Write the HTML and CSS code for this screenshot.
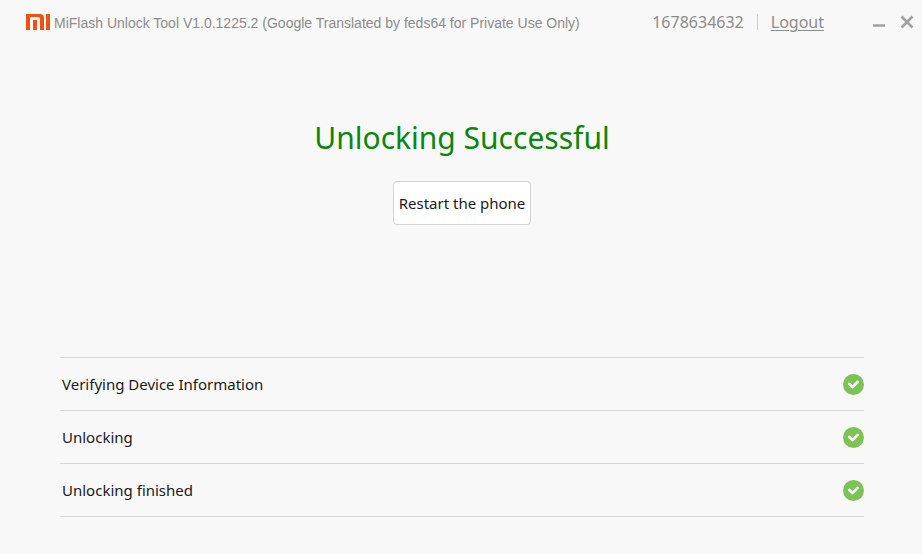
FILE: index.html
```html
<!DOCTYPE html>
<html lang="en">
<head>
    <meta charset="UTF-8">
    <meta name="viewport" content="width=device-width, initial-scale=1.0">
    <title>MiFlash Unlock Tool</title>
    <link rel="stylesheet" href="styles.css">
</head>
<body>
    <header class="titlebar">
        <svg class="logo" viewBox="0 0 24 16" aria-hidden="true">
            <path d="M0 0H14Q18 0 18 4V16H14V5Q14 3 12 3H4V16H0Z"/>
            <path d="M7 6H11V16H7Z"/>
            <path d="M20 0H24V16H20Z"/>
        </svg>
        <span class="app-name">MiFlash Unlock Tool V1.0.1225.2 (Google Translated by feds64 for Private Use Only)</span>
        <div class="account">
            <span class="account-id">1678634632</span>
            <a href="#" class="logout">Logout</a>
        </div>
        <div class="window-buttons">
            <button type="button" aria-label="Minimize">
                <svg viewBox="0 0 14 14"><path d="M1 10.5H13"/></svg>
            </button>
            <button type="button" aria-label="Close">
                <svg viewBox="0 0 14 14"><path d="M1.5 1.5L12.5 12.5M12.5 1.5L1.5 12.5"/></svg>
            </button>
        </div>
    </header>

    <main>
        <section class="result">
            <h1>Unlocking Successful</h1>
            <button type="button" class="restart">Restart the phone</button>
        </section>

        <ul class="steps">
            <li>
                <span>Verifying Device Information</span>
                <svg class="check" viewBox="0 0 20 20" role="img" aria-label="Done"><circle cx="10" cy="10" r="10"/><path d="M6 9.5L9 12.5L14 7.5"/></svg>
            </li>
            <li>
                <span>Unlocking</span>
                <svg class="check" viewBox="0 0 20 20" role="img" aria-label="Done"><circle cx="10" cy="10" r="10"/><path d="M6 9.5L9 12.5L14 7.5"/></svg>
            </li>
            <li>
                <span>Unlocking finished</span>
                <svg class="check" viewBox="0 0 20 20" role="img" aria-label="Done"><circle cx="10" cy="10" r="10"/><path d="M6 9.5L9 12.5L14 7.5"/></svg>
            </li>
        </ul>
    </main>
</body>
</html>
```
FILE: styles.css
```css
body {
    margin: 0;
    background: #f8f8f8;
    color: #1a1a1a;
    font-family: "Noto Sans", "Open Sans", sans-serif;
    font-size: 15px;
}
button {
    font: inherit;
    color: inherit;
    cursor: pointer;
}
.titlebar {
    display: flex;
    align-items: center;
    height: 44px;
    padding: 0 8px 0 26px;
    color: #8c8c8c;
}
.logo {
    width: 24px;
    height: 16px;
    margin-right: 4px;
    fill: #f2500f;
}
.app-name {
    padding-top: 2px;
    font-family: "Liberation Sans", Arial, sans-serif;
    font-size: 14px;
}
.account {
    display: flex;
    align-items: center;
    margin-left: auto;
    font-size: 16px;
    line-height: 16px;
}
.account-id {
    padding-right: 13px;
    border-right: 1px solid #ccc;
}
.logout {
    margin-left: 13px;
    color: inherit;
    text-underline-offset: 2px;
}
.window-buttons {
    display: flex;
    gap: 14px;
    margin-left: 48px;
}
.window-buttons button {
    display: flex;
    padding: 0;
    border: 0;
    background: none;
}
.window-buttons svg {
    width: 14px;
    height: 14px;
    fill: none;
    stroke: #a0a0a0;
    stroke-width: 2.5;
}
.result {
    display: flex;
    flex-direction: column;
    align-items: center;
    padding: 72px 0 0 2px;
}
h1 {
    margin: 0;
    color: #0a870a;
    font-size: 30px;
    font-weight: 400;
    line-height: 44px;
}
.restart {
    height: 44px;
    margin-top: 21px;
    padding: 0 5px;
    border: 1px solid #d3d3d3;
    border-radius: 4px;
    background: #fff;
}
.steps {
    margin: 132px 58px 0 60px;
    padding: 0;
    border-top: 1px solid #d6d6d6;
    list-style: none;
}
.steps li {
    display: flex;
    align-items: center;
    justify-content: space-between;
    height: 52px;
    padding-left: 2px;
    border-bottom: 1px solid #d6d6d6;
}
.check {
    width: 21px;
    height: 21px;
    fill: #7dc255;
}
.check path {
    fill: none;
    stroke: #fff;
    stroke-width: 2.5;
    stroke-linecap: round;
    stroke-linejoin: round;
}
```
